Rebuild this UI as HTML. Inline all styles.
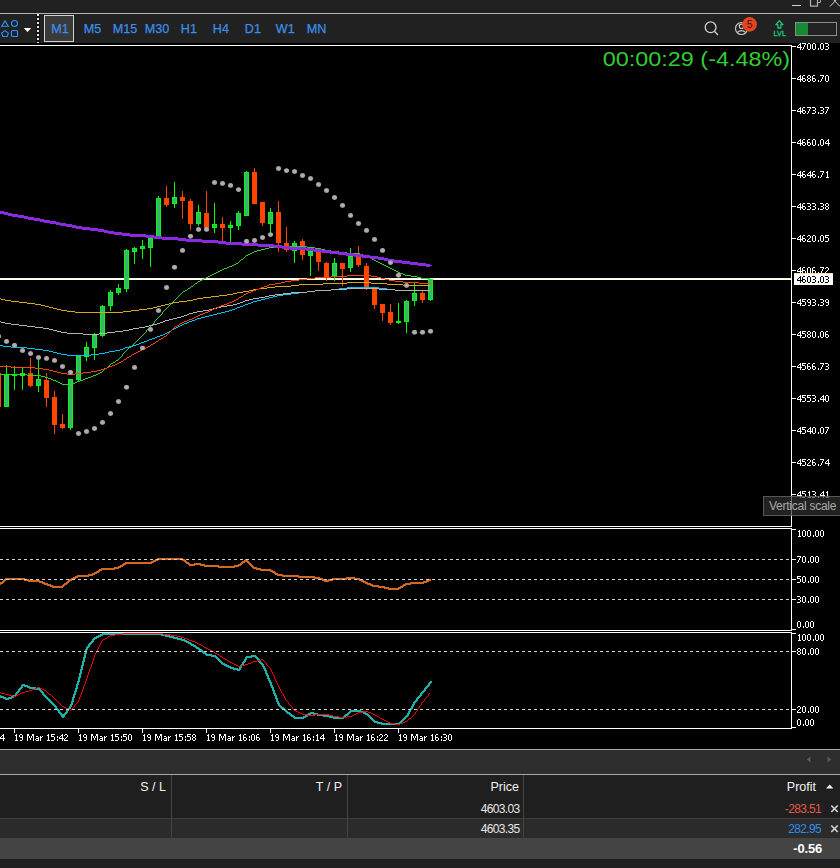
<!DOCTYPE html>
<html><head><meta charset="utf-8"><title>chart</title>
<style>
html,body{margin:0;padding:0;background:#1f1f1f;}
body{width:840px;height:868px;position:relative;overflow:hidden;font-family:"Liberation Sans",sans-serif;}
.abs{position:absolute}
.ax{position:absolute;left:797px;color:#fff;font-size:9.33px;line-height:12px;height:12px;letter-spacing:-0.19px;white-space:nowrap;will-change:transform}
.tm{position:absolute;top:731px;color:#fff;font-size:9.33px;line-height:12px;white-space:nowrap;letter-spacing:-0.19px;will-change:transform}
.tf{position:absolute;top:22px;color:#3b8eea;font-size:12.6px;line-height:15px;white-space:nowrap;margin-left:0.8px;-webkit-text-stroke:0.25px #3b8eea}
.hd{position:absolute;top:780px;color:#f2f2f2;font-size:12.5px;line-height:15px;white-space:nowrap;text-align:right}
.cell{position:absolute;font-size:12px;line-height:15px;white-space:nowrap;text-align:right;color:#e6e6e6;letter-spacing:-0.65px}
</style></head><body>
<!-- title + toolbar -->
<div class="abs" style="left:0;top:0;width:840px;height:43px;background:#212121"></div>
<div class="abs" style="left:0;top:13px;width:840px;height:1px;background:#b4b4b4"></div>
<svg id="chart" width="840" height="868" viewBox="0 0 840 868" style="position:absolute;left:0;top:0"><rect x="0" y="43" width="840" height="706" fill="#000"/><g shape-rendering="crispEdges"><rect x="0" y="278" width="791" height="1" fill="#fff1dc"/><rect x="0" y="279" width="791" height="1" fill="#fff"/><rect x="0" y="45" width="792" height="1" fill="#fff"/><rect x="791" y="45" width="1" height="482" fill="#fff"/><rect x="0" y="526" width="792" height="1" fill="#fff"/><rect x="0" y="528" width="792" height="1" fill="#fff"/><rect x="791" y="528" width="1" height="103" fill="#fff"/><rect x="0" y="630" width="792" height="1" fill="#fff"/><rect x="0" y="632" width="792" height="1" fill="#fff"/><rect x="791" y="632" width="1" height="97" fill="#fff"/><rect x="0" y="728" width="792" height="1" fill="#fff"/><rect x="792" y="46" width="4" height="1" fill="#fff"/><rect x="792" y="78" width="4" height="1" fill="#fff"/><rect x="792" y="110" width="4" height="1" fill="#fff"/><rect x="792" y="142" width="4" height="1" fill="#fff"/><rect x="792" y="174" width="4" height="1" fill="#fff"/><rect x="792" y="206" width="4" height="1" fill="#fff"/><rect x="792" y="238" width="4" height="1" fill="#fff"/><rect x="792" y="270" width="4" height="1" fill="#fff"/><rect x="792" y="302" width="4" height="1" fill="#fff"/><rect x="792" y="334" width="4" height="1" fill="#fff"/><rect x="792" y="366" width="4" height="1" fill="#fff"/><rect x="792" y="398" width="4" height="1" fill="#fff"/><rect x="792" y="430" width="4" height="1" fill="#fff"/><rect x="792" y="462" width="4" height="1" fill="#fff"/><rect x="792" y="494" width="4" height="1" fill="#fff"/><rect x="792" y="529" width="4" height="1" fill="#fff"/><rect x="792" y="559" width="4" height="1" fill="#fff"/><rect x="792" y="579" width="4" height="1" fill="#fff"/><rect x="792" y="599" width="4" height="1" fill="#fff"/><rect x="792" y="629" width="4" height="1" fill="#fff"/><rect x="792" y="633" width="4" height="1" fill="#fff"/><rect x="792" y="651" width="4" height="1" fill="#fff"/><rect x="792" y="709" width="4" height="1" fill="#fff"/><rect x="792" y="727" width="4" height="1" fill="#fff"/><rect x="14" y="728" width="1" height="5" fill="#fff"/><rect x="78" y="728" width="1" height="5" fill="#fff"/><rect x="142" y="728" width="1" height="5" fill="#fff"/><rect x="206" y="728" width="1" height="5" fill="#fff"/><rect x="270" y="728" width="1" height="5" fill="#fff"/><rect x="334" y="728" width="1" height="5" fill="#fff"/><rect x="398" y="728" width="1" height="5" fill="#fff"/><rect x="-2" y="370" width="1" height="37" fill="#ff4500"/><rect x="-4" y="373" width="5" height="34" fill="#ff4500"/><rect x="6" y="365" width="1" height="42" fill="#00ff00"/><rect x="4" y="375" width="5" height="32" fill="#00ff00"/><rect x="5" y="376" width="3" height="30" fill="#3cb371"/><rect x="14" y="366" width="1" height="24" fill="#00ff00"/><rect x="12" y="374" width="5" height="2" fill="#00ff00"/><rect x="22" y="368" width="1" height="22" fill="#00ff00"/><rect x="20" y="373" width="5" height="3" fill="#00ff00"/><rect x="21" y="374" width="3" height="1" fill="#3cb371"/><rect x="30" y="358" width="1" height="29" fill="#ff4500"/><rect x="28" y="373" width="5" height="13" fill="#ff4500"/><rect x="38" y="360" width="1" height="32" fill="#00ff00"/><rect x="36" y="379" width="5" height="7" fill="#00ff00"/><rect x="37" y="380" width="3" height="5" fill="#3cb371"/><rect x="46" y="373" width="1" height="34" fill="#ff4500"/><rect x="44" y="380" width="5" height="18" fill="#ff4500"/><rect x="54" y="391" width="1" height="43" fill="#ff4500"/><rect x="52" y="397" width="5" height="28" fill="#ff4500"/><rect x="62" y="414" width="1" height="15" fill="#ff4500"/><rect x="60" y="424" width="5" height="4" fill="#ff4500"/><rect x="70" y="379" width="1" height="51" fill="#00ff00"/><rect x="68" y="379" width="5" height="49" fill="#00ff00"/><rect x="69" y="380" width="3" height="47" fill="#3cb371"/><rect x="78" y="356" width="1" height="25" fill="#00ff00"/><rect x="76" y="356" width="5" height="24" fill="#00ff00"/><rect x="77" y="357" width="3" height="22" fill="#3cb371"/><rect x="86" y="342" width="1" height="19" fill="#00ff00"/><rect x="84" y="347" width="5" height="10" fill="#00ff00"/><rect x="85" y="348" width="3" height="8" fill="#3cb371"/><rect x="94" y="333" width="1" height="27" fill="#00ff00"/><rect x="92" y="335" width="5" height="13" fill="#00ff00"/><rect x="93" y="336" width="3" height="11" fill="#3cb371"/><rect x="102" y="305" width="1" height="32" fill="#00ff00"/><rect x="100" y="306" width="5" height="30" fill="#00ff00"/><rect x="101" y="307" width="3" height="28" fill="#3cb371"/><rect x="110" y="290" width="1" height="21" fill="#00ff00"/><rect x="108" y="292" width="5" height="14" fill="#00ff00"/><rect x="109" y="293" width="3" height="12" fill="#3cb371"/><rect x="118" y="284" width="1" height="11" fill="#00ff00"/><rect x="116" y="288" width="5" height="5" fill="#00ff00"/><rect x="117" y="289" width="3" height="3" fill="#3cb371"/><rect x="126" y="249" width="1" height="43" fill="#00ff00"/><rect x="124" y="250" width="5" height="39" fill="#00ff00"/><rect x="125" y="251" width="3" height="37" fill="#3cb371"/><rect x="134" y="247" width="1" height="17" fill="#00ff00"/><rect x="132" y="248" width="5" height="4" fill="#00ff00"/><rect x="133" y="249" width="3" height="2" fill="#3cb371"/><rect x="142" y="240" width="1" height="19" fill="#00ff00"/><rect x="140" y="246" width="5" height="3" fill="#00ff00"/><rect x="141" y="247" width="3" height="1" fill="#3cb371"/><rect x="150" y="236" width="1" height="31" fill="#00ff00"/><rect x="148" y="238" width="5" height="10" fill="#00ff00"/><rect x="149" y="239" width="3" height="8" fill="#3cb371"/><rect x="158" y="196" width="1" height="41" fill="#00ff00"/><rect x="156" y="198" width="5" height="39" fill="#00ff00"/><rect x="157" y="199" width="3" height="37" fill="#3cb371"/><rect x="166" y="186" width="1" height="21" fill="#ff4500"/><rect x="164" y="198" width="5" height="7" fill="#ff4500"/><rect x="174" y="182" width="1" height="26" fill="#00ff00"/><rect x="172" y="197" width="5" height="7" fill="#00ff00"/><rect x="173" y="198" width="3" height="5" fill="#3cb371"/><rect x="182" y="191" width="1" height="28" fill="#ff4500"/><rect x="180" y="197" width="5" height="4" fill="#ff4500"/><rect x="190" y="199" width="1" height="31" fill="#ff4500"/><rect x="188" y="201" width="5" height="23" fill="#ff4500"/><rect x="198" y="205" width="1" height="21" fill="#00ff00"/><rect x="196" y="212" width="5" height="12" fill="#00ff00"/><rect x="197" y="213" width="3" height="10" fill="#3cb371"/><rect x="206" y="191" width="1" height="38" fill="#ff4500"/><rect x="204" y="213" width="5" height="15" fill="#ff4500"/><rect x="214" y="203" width="1" height="30" fill="#00ff00"/><rect x="212" y="224" width="5" height="4" fill="#00ff00"/><rect x="213" y="225" width="3" height="2" fill="#3cb371"/><rect x="222" y="217" width="1" height="25" fill="#ff4500"/><rect x="220" y="224" width="5" height="4" fill="#ff4500"/><rect x="230" y="221" width="1" height="22" fill="#00ff00"/><rect x="228" y="225" width="5" height="3" fill="#00ff00"/><rect x="229" y="226" width="3" height="1" fill="#3cb371"/><rect x="238" y="211" width="1" height="19" fill="#00ff00"/><rect x="236" y="213" width="5" height="13" fill="#00ff00"/><rect x="237" y="214" width="3" height="11" fill="#3cb371"/><rect x="246" y="171" width="1" height="45" fill="#00ff00"/><rect x="244" y="172" width="5" height="44" fill="#00ff00"/><rect x="245" y="173" width="3" height="42" fill="#3cb371"/><rect x="254" y="168" width="1" height="36" fill="#ff4500"/><rect x="252" y="172" width="5" height="32" fill="#ff4500"/><rect x="262" y="202" width="1" height="24" fill="#ff4500"/><rect x="260" y="202" width="5" height="21" fill="#ff4500"/><rect x="270" y="208" width="1" height="26" fill="#00ff00"/><rect x="268" y="212" width="5" height="12" fill="#00ff00"/><rect x="269" y="213" width="3" height="10" fill="#3cb371"/><rect x="278" y="201" width="1" height="51" fill="#ff4500"/><rect x="276" y="212" width="5" height="31" fill="#ff4500"/><rect x="286" y="227" width="1" height="25" fill="#ff4500"/><rect x="284" y="243" width="5" height="7" fill="#ff4500"/><rect x="294" y="241" width="1" height="22" fill="#00ff00"/><rect x="292" y="243" width="5" height="8" fill="#00ff00"/><rect x="293" y="244" width="3" height="6" fill="#3cb371"/><rect x="302" y="239" width="1" height="21" fill="#ff4500"/><rect x="300" y="241" width="5" height="14" fill="#ff4500"/><rect x="310" y="248" width="1" height="28" fill="#00ff00"/><rect x="308" y="251" width="5" height="5" fill="#00ff00"/><rect x="309" y="252" width="3" height="3" fill="#3cb371"/><rect x="318" y="250" width="1" height="21" fill="#ff4500"/><rect x="316" y="251" width="5" height="11" fill="#ff4500"/><rect x="326" y="262" width="1" height="19" fill="#ff4500"/><rect x="324" y="263" width="5" height="15" fill="#ff4500"/><rect x="334" y="258" width="1" height="23" fill="#00ff00"/><rect x="332" y="263" width="5" height="13" fill="#00ff00"/><rect x="333" y="264" width="3" height="11" fill="#3cb371"/><rect x="342" y="263" width="1" height="23" fill="#ff4500"/><rect x="340" y="263" width="5" height="6" fill="#ff4500"/><rect x="350" y="248" width="1" height="24" fill="#00ff00"/><rect x="348" y="256" width="5" height="12" fill="#00ff00"/><rect x="349" y="257" width="3" height="10" fill="#3cb371"/><rect x="358" y="246" width="1" height="21" fill="#ff4500"/><rect x="356" y="254" width="5" height="11" fill="#ff4500"/><rect x="366" y="263" width="1" height="27" fill="#ff4500"/><rect x="364" y="266" width="5" height="21" fill="#ff4500"/><rect x="374" y="289" width="1" height="20" fill="#ff4500"/><rect x="372" y="289" width="5" height="16" fill="#ff4500"/><rect x="382" y="304" width="1" height="17" fill="#ff4500"/><rect x="380" y="304" width="5" height="9" fill="#ff4500"/><rect x="390" y="304" width="1" height="21" fill="#ff4500"/><rect x="388" y="312" width="5" height="11" fill="#ff4500"/><rect x="398" y="303" width="1" height="21" fill="#00ff00"/><rect x="396" y="321" width="5" height="2" fill="#00ff00"/><rect x="406" y="300" width="1" height="33" fill="#00ff00"/><rect x="404" y="301" width="5" height="21" fill="#00ff00"/><rect x="405" y="302" width="3" height="19" fill="#3cb371"/><rect x="414" y="283" width="1" height="23" fill="#00ff00"/><rect x="412" y="293" width="5" height="8" fill="#00ff00"/><rect x="413" y="294" width="3" height="6" fill="#3cb371"/><rect x="422" y="291" width="1" height="12" fill="#ff4500"/><rect x="420" y="293" width="5" height="7" fill="#ff4500"/><rect x="430" y="279" width="1" height="22" fill="#00ff00"/><rect x="428" y="279" width="5" height="21" fill="#00ff00"/><rect x="429" y="280" width="3" height="19" fill="#3cb371"/></g><g shape-rendering="crispEdges"><path d="M275 246h32v1h-32zM269 247h6v1h-6zM307 247h8v1h-8zM265 248h4v1h-4zM315 248h6v1h-6zM261 249h4v1h-4zM321 249h4v1h-4zM257 250h4v1h-4zM325 250h6v1h-6zM254 251h3v1h-3zM331 251h8v1h-8zM252 252h2v1h-2zM339 252h8v1h-8zM250 253h2v1h-2zM347 253h13v1h-13zM248 254h2v1h-2zM360 254h3v1h-3zM246 255h2v1h-2zM363 255h2v1h-2zM245 256h1v1h-1zM365 256h3v1h-3zM244 257h1v1h-1zM368 257h2v1h-2zM243 258h1v1h-1zM370 258h2v1h-2zM241 259h2v1h-2zM372 259h2v1h-2zM240 260h1v1h-1zM374 260h2v1h-2zM239 261h1v1h-1zM376 261h2v1h-2zM238 262h1v1h-1zM378 262h2v1h-2zM236 263h2v1h-2zM380 263h2v1h-2zM234 264h2v1h-2zM382 264h2v1h-2zM232 265h2v1h-2zM384 265h2v1h-2zM229 266h3v1h-3zM386 266h2v1h-2zM227 267h2v1h-2zM388 267h2v1h-2zM224 268h3v1h-3zM390 268h2v1h-2zM222 269h2v1h-2zM392 269h2v1h-2zM220 270h2v1h-2zM394 270h2v1h-2zM218 271h2v1h-2zM396 271h2v1h-2zM216 272h2v1h-2zM398 272h2v1h-2zM214 273h2v1h-2zM400 273h3v1h-3zM212 274h2v1h-2zM403 274h2v1h-2zM210 275h2v1h-2zM405 275h6v1h-6zM208 276h2v1h-2zM411 276h6v1h-6zM206 277h2v1h-2zM417 277h4v1h-4zM204 278h2v1h-2zM421 278h9v1h-9zM202 279h2v1h-2zM200 280h2v1h-2zM198 281h2v1h-2zM197 282h1v1h-1zM195 283h2v1h-2zM194 284h1v1h-1zM193 285h1v1h-1zM191 286h2v1h-2zM190 287h1v1h-1zM188 288h2v1h-2zM187 289h1v1h-1zM185 290h2v1h-2zM183 291h2v1h-2zM182 292h1v1h-1zM181 293h1v1h-1zM180 294h1v1h-1zM179 295h1v1h-1zM178 296h1v1h-1zM177 297h1v1h-1zM176 298h1v1h-1zM175 299h1v1h-1zM174 300h1v1h-1zM173 301h1v1h-1zM172 302h1v1h-1zM171 303h1v1h-1zM170 304h1v1h-1zM169 305h1v1h-1zM168 306h1v1h-1zM167 307h1v1h-1zM166 308h1v1h-1zM165 309h1v1h-1zM164 310h1v1h-1zM163 311h1v1h-1zM162 312h1v1h-1zM162 313h1v1h-1zM161 314h1v1h-1zM160 315h1v1h-1zM159 316h1v1h-1zM158 317h1v1h-1zM157 318h1v1h-1zM156 319h1v1h-1zM155 320h1v1h-1zM154 321h1v1h-1zM154 322h1v1h-1zM153 323h1v1h-1zM152 324h1v1h-1zM151 325h1v1h-1zM150 326h1v1h-1zM149 327h1v1h-1zM148 328h1v1h-1zM147 329h1v1h-1zM146 330h1v1h-1zM146 331h1v1h-1zM145 332h1v1h-1zM144 333h1v1h-1zM143 334h1v1h-1zM142 335h1v1h-1zM141 336h1v1h-1zM140 337h1v1h-1zM139 338h1v1h-1zM138 339h1v1h-1zM137 340h1v1h-1zM136 341h1v1h-1zM135 342h1v1h-1zM134 343h1v1h-1zM133 344h1v1h-1zM132 345h1v1h-1zM131 346h1v1h-1zM129 347h2v1h-2zM128 348h1v1h-1zM127 349h1v1h-1zM126 350h1v1h-1zM125 351h1v1h-1zM124 352h1v1h-1zM123 353h1v1h-1zM122 354h1v1h-1zM122 355h1v1h-1zM121 356h1v1h-1zM120 357h1v1h-1zM119 358h1v1h-1zM118 359h1v1h-1zM116 360h2v1h-2zM115 361h1v1h-1zM113 362h2v1h-2zM111 363h2v1h-2zM110 364h1v1h-1zM109 365h1v1h-1zM108 366h1v1h-1zM107 367h1v1h-1zM105 368h2v1h-2zM104 369h1v1h-1zM103 370h1v1h-1zM102 371h1v1h-1zM100 372h2v1h-2zM98 373h2v1h-2zM-2 374h29v1h-29zM96 374h2v1h-2zM27 375h14v1h-14zM93 375h3v1h-3zM41 376h4v1h-4zM91 376h2v1h-2zM45 377h3v1h-3zM88 377h3v1h-3zM48 378h3v1h-3zM85 378h3v1h-3zM51 379h2v1h-2zM83 379h2v1h-2zM53 380h3v1h-3zM80 380h3v1h-3zM56 381h2v1h-2zM77 381h3v1h-3zM58 382h2v1h-2zM75 382h2v1h-2zM60 383h2v1h-2zM72 383h3v1h-3zM62 384h10v1h-10z" fill="#32cd32"/><path d="M347 287h32v1h-32zM339 288h8v1h-8zM379 288h8v1h-8zM331 289h8v1h-8zM387 289h8v1h-8zM315 290h16v1h-16zM395 290h35v1h-35zM307 291h8v1h-8zM299 292h8v1h-8zM291 293h8v1h-8zM283 294h8v1h-8zM277 295h6v1h-6zM273 296h4v1h-4zM269 297h4v1h-4zM265 298h4v1h-4zM261 299h4v1h-4zM257 300h4v1h-4zM253 301h4v1h-4zM251 302h2v1h-2zM248 303h3v1h-3zM245 304h3v1h-3zM243 305h2v1h-2zM240 306h3v1h-3zM237 307h3v1h-3zM235 308h2v1h-2zM232 309h3v1h-3zM229 310h3v1h-3zM225 311h4v1h-4zM221 312h4v1h-4zM217 313h4v1h-4zM213 314h4v1h-4zM209 315h4v1h-4zM205 316h4v1h-4zM201 317h4v1h-4zM197 318h4v1h-4zM195 319h2v1h-2zM192 320h3v1h-3zM189 321h3v1h-3zM187 322h2v1h-2zM184 323h3v1h-3zM182 324h2v1h-2zM180 325h2v1h-2zM178 326h2v1h-2zM176 327h2v1h-2zM174 328h2v1h-2zM172 329h2v1h-2zM171 330h1v1h-1zM169 331h2v1h-2zM167 332h2v1h-2zM165 333h2v1h-2zM163 334h2v1h-2zM160 335h3v1h-3zM157 336h3v1h-3zM155 337h2v1h-2zM152 338h3v1h-3zM149 339h3v1h-3zM147 340h2v1h-2zM144 341h3v1h-3zM141 342h3v1h-3zM139 343h2v1h-2zM136 344h3v1h-3zM-2 345h5v1h-5zM133 345h3v1h-3zM3 346h8v1h-8zM129 346h4v1h-4zM11 347h16v1h-16zM125 347h4v1h-4zM27 348h8v1h-8zM123 348h2v1h-2zM35 349h8v1h-8zM120 349h3v1h-3zM43 350h6v1h-6zM115 350h5v1h-5zM49 351h4v1h-4zM109 351h6v1h-6zM53 352h4v1h-4zM105 352h4v1h-4zM57 353h4v1h-4zM99 353h6v1h-6zM61 354h6v1h-6zM91 354h8v1h-8zM67 355h24v1h-24z" fill="#00bfff"/><path d="M347 282h24v1h-24zM323 283h24v1h-24zM371 283h16v1h-16zM299 284h24v1h-24zM387 284h16v1h-16zM291 285h8v1h-8zM403 285h27v1h-27zM275 286h16v1h-16zM267 287h8v1h-8zM259 288h8v1h-8zM253 289h6v1h-6zM249 290h4v1h-4zM243 291h6v1h-6zM237 292h6v1h-6zM233 293h4v1h-4zM227 294h6v1h-6zM219 295h8v1h-8zM211 296h8v1h-8zM203 297h8v1h-8zM-2 298h3v1h-3zM197 298h6v1h-6zM1 299h4v1h-4zM193 299h4v1h-4zM5 300h6v1h-6zM187 300h6v1h-6zM11 301h8v1h-8zM179 301h8v1h-8zM19 302h8v1h-8zM173 302h6v1h-6zM27 303h8v1h-8zM169 303h4v1h-4zM35 304h6v1h-6zM165 304h4v1h-4zM41 305h4v1h-4zM161 305h4v1h-4zM45 306h4v1h-4zM157 306h4v1h-4zM49 307h4v1h-4zM153 307h4v1h-4zM53 308h4v1h-4zM147 308h6v1h-6zM57 309h4v1h-4zM139 309h8v1h-8zM61 310h6v1h-6zM131 310h8v1h-8zM67 311h8v1h-8zM123 311h8v1h-8zM75 312h48v1h-48z" fill="#daa520"/><path d="M347 288h32v1h-32zM331 289h16v1h-16zM379 289h16v1h-16zM315 290h16v1h-16zM395 290h35v1h-35zM307 291h8v1h-8zM291 292h16v1h-16zM283 293h8v1h-8zM275 294h8v1h-8zM269 295h6v1h-6zM265 296h4v1h-4zM259 297h6v1h-6zM253 298h6v1h-6zM249 299h4v1h-4zM245 300h4v1h-4zM243 301h2v1h-2zM240 302h3v1h-3zM237 303h3v1h-3zM233 304h4v1h-4zM227 305h6v1h-6zM221 306h6v1h-6zM217 307h4v1h-4zM213 308h4v1h-4zM209 309h4v1h-4zM203 310h6v1h-6zM197 311h6v1h-6zM193 312h4v1h-4zM189 313h4v1h-4zM187 314h2v1h-2zM184 315h3v1h-3zM181 316h3v1h-3zM177 317h4v1h-4zM173 318h4v1h-4zM169 319h4v1h-4zM165 320h4v1h-4zM-2 321h3v1h-3zM163 321h2v1h-2zM1 322h4v1h-4zM160 322h3v1h-3zM5 323h6v1h-6zM157 323h3v1h-3zM11 324h8v1h-8zM153 324h4v1h-4zM19 325h8v1h-8zM149 325h4v1h-4zM27 326h8v1h-8zM145 326h4v1h-4zM35 327h8v1h-8zM139 327h6v1h-6zM43 328h6v1h-6zM133 328h6v1h-6zM49 329h4v1h-4zM129 329h4v1h-4zM53 330h4v1h-4zM123 330h6v1h-6zM57 331h4v1h-4zM115 331h8v1h-8zM61 332h6v1h-6zM107 332h8v1h-8zM67 333h16v1h-16zM99 333h8v1h-8zM83 334h16v1h-16z" fill="#b4b4b4"/><path d="M347 275h24v1h-24zM331 276h16v1h-16zM371 276h6v1h-6zM315 277h16v1h-16zM377 277h4v1h-4zM307 278h8v1h-8zM381 278h4v1h-4zM299 279h8v1h-8zM385 279h4v1h-4zM291 280h8v1h-8zM389 280h6v1h-6zM285 281h6v1h-6zM395 281h8v1h-8zM281 282h4v1h-4zM403 282h16v1h-16zM275 283h6v1h-6zM419 283h11v1h-11zM269 284h6v1h-6zM267 285h2v1h-2zM264 286h3v1h-3zM261 287h3v1h-3zM259 288h2v1h-2zM256 289h3v1h-3zM253 290h3v1h-3zM251 291h2v1h-2zM248 292h3v1h-3zM246 293h2v1h-2zM244 294h2v1h-2zM243 295h1v1h-1zM241 296h2v1h-2zM239 297h2v1h-2zM238 298h1v1h-1zM236 299h2v1h-2zM234 300h2v1h-2zM232 301h2v1h-2zM229 302h3v1h-3zM227 303h2v1h-2zM224 304h3v1h-3zM221 305h3v1h-3zM219 306h2v1h-2zM216 307h3v1h-3zM214 308h2v1h-2zM212 309h2v1h-2zM210 310h2v1h-2zM208 311h2v1h-2zM205 312h3v1h-3zM203 313h2v1h-2zM200 314h3v1h-3zM198 315h2v1h-2zM196 316h2v1h-2zM194 317h2v1h-2zM192 318h2v1h-2zM189 319h3v1h-3zM187 320h2v1h-2zM184 321h3v1h-3zM182 322h2v1h-2zM180 323h2v1h-2zM179 324h1v1h-1zM177 325h2v1h-2zM175 326h2v1h-2zM174 327h1v1h-1zM173 328h1v1h-1zM172 329h1v1h-1zM171 330h1v1h-1zM170 331h1v1h-1zM169 332h1v1h-1zM168 333h1v1h-1zM167 334h1v1h-1zM166 335h1v1h-1zM164 336h2v1h-2zM163 337h1v1h-1zM161 338h2v1h-2zM159 339h2v1h-2zM158 340h1v1h-1zM156 341h2v1h-2zM155 342h1v1h-1zM153 343h2v1h-2zM151 344h2v1h-2zM150 345h1v1h-1zM148 346h2v1h-2zM146 347h2v1h-2zM144 348h2v1h-2zM142 349h2v1h-2zM140 350h2v1h-2zM138 351h2v1h-2zM136 352h2v1h-2zM134 353h2v1h-2zM132 354h2v1h-2zM131 355h1v1h-1zM129 356h2v1h-2zM127 357h2v1h-2zM126 358h1v1h-1zM124 359h2v1h-2zM123 360h1v1h-1zM121 361h2v1h-2zM119 362h2v1h-2zM117 363h2v1h-2zM115 364h2v1h-2zM112 365h3v1h-3zM-2 366h13v1h-13zM109 366h3v1h-3zM11 367h24v1h-24zM107 367h2v1h-2zM35 368h8v1h-8zM104 368h3v1h-3zM43 369h6v1h-6zM101 369h3v1h-3zM49 370h4v1h-4zM97 370h4v1h-4zM53 371h4v1h-4zM91 371h6v1h-6zM57 372h4v1h-4zM83 372h8v1h-8zM61 373h6v1h-6zM75 373h8v1h-8zM67 374h8v1h-8z" fill="#ff4500"/><path d="M-3 210h3v1h-3zM-3 211h7v1h-7zM-3 212h11v1h-11zM0 213h12v1h-12zM4 214h14v1h-14zM8 215h16v1h-16zM12 216h16v1h-16zM18 217h16v1h-16zM24 218h16v1h-16zM28 219h16v1h-16zM34 220h16v1h-16zM40 221h16v1h-16zM44 222h16v1h-16zM50 223h16v1h-16zM56 224h16v1h-16zM60 225h16v1h-16zM66 226h16v1h-16zM72 227h18v1h-18zM76 228h22v1h-22zM82 229h22v1h-22zM90 230h18v1h-18zM98 231h16v1h-16zM104 232h18v1h-18zM108 233h22v1h-22zM114 234h32v1h-32zM122 235h32v1h-32zM130 236h32v1h-32zM146 237h32v1h-32zM154 238h32v1h-32zM162 239h40v1h-40zM178 240h40v1h-40zM186 241h40v1h-40zM202 242h40v1h-40zM218 243h40v1h-40zM226 244h48v1h-48zM242 245h40v1h-40zM258 246h32v1h-32zM274 247h32v1h-32zM282 248h32v1h-32zM290 249h32v1h-32zM306 250h24v1h-24zM314 251h24v1h-24zM322 252h24v1h-24zM330 253h24v1h-24zM338 254h24v1h-24zM346 255h24v1h-24zM354 256h24v1h-24zM362 257h22v1h-22zM370 258h18v1h-18zM378 259h16v1h-16zM384 260h18v1h-18zM388 261h22v1h-22zM394 262h24v1h-24zM402 263h24v1h-24zM410 264h20v1h-20zM418 265h12v1h-12zM426 266h4v1h-4zM430 265h2v1h-2z" fill="#8a2be2"/><path d="M157 558h26v1h-26zM155 559h30v1h-30zM245 559h2v1h-2zM153 560h5v1h-5zM182 560h4v1h-4zM244 560h4v1h-4zM151 561h5v1h-5zM184 561h3v1h-3zM242 561h7v1h-7zM125 562h29v1h-29zM185 562h4v1h-4zM241 562h4v1h-4zM247 562h3v1h-3zM123 563h29v1h-29zM186 563h4v1h-4zM194 563h7v1h-7zM240 563h3v1h-3zM248 563h3v1h-3zM122 564h4v1h-4zM188 564h17v1h-17zM238 564h4v1h-4zM249 564h3v1h-3zM120 565h4v1h-4zM189 565h6v1h-6zM200 565h19v1h-19zM234 565h7v1h-7zM250 565h3v1h-3zM118 566h5v1h-5zM204 566h35v1h-35zM251 566h3v1h-3zM114 567h7v1h-7zM218 567h17v1h-17zM252 567h5v1h-5zM101 568h18v1h-18zM253 568h8v1h-8zM99 569h16v1h-16zM256 569h15v1h-15zM98 570h4v1h-4zM260 570h13v1h-13zM96 571h4v1h-4zM270 571h5v1h-5zM94 572h5v1h-5zM272 572h4v1h-4zM92 573h5v1h-5zM274 573h4v1h-4zM88 574h7v1h-7zM275 574h8v1h-8zM77 575h16v1h-16zM277 575h22v1h-22zM75 576h14v1h-14zM282 576h33v1h-33zM73 577h5v1h-5zM298 577h22v1h-22zM346 577h9v1h-9zM5 578h20v1h-20zM71 578h5v1h-5zM314 578h9v1h-9zM332 578h28v1h-28zM4 579h25v1h-25zM69 579h5v1h-5zM319 579h6v1h-6zM328 579h19v1h-19zM354 579h8v1h-8zM428 579h3v1h-3zM3 580h3v1h-3zM24 580h16v1h-16zM68 580h4v1h-4zM322 580h11v1h-11zM359 580h5v1h-5zM426 580h5v1h-5zM2 581h3v1h-3zM28 581h15v1h-15zM67 581h3v1h-3zM324 581h5v1h-5zM361 581h5v1h-5zM423 581h6v1h-6zM0 582h4v1h-4zM39 582h6v1h-6zM66 582h3v1h-3zM363 582h5v1h-5zM410 582h17v1h-17zM-1 583h4v1h-4zM42 583h6v1h-6zM64 583h4v1h-4zM365 583h6v1h-6zM405 583h19v1h-19zM-2 584h3v1h-3zM44 584h7v1h-7zM63 584h4v1h-4zM367 584h6v1h-6zM403 584h8v1h-8zM-3 585h3v1h-3zM47 585h6v1h-6zM62 585h3v1h-3zM370 585h9v1h-9zM402 585h4v1h-4zM-3 586h2v1h-2zM50 586h14v1h-14zM372 586h13v1h-13zM400 586h4v1h-4zM52 587h11v1h-11zM378 587h11v1h-11zM398 587h5v1h-5zM384 588h17v1h-17zM388 589h11v1h-11z" fill="#d2691e"/><path d="M102 633h60v1h-60zM100 634h66v1h-66zM98 635h5v1h-5zM161 635h9v1h-9zM96 636h5v1h-5zM165 636h9v1h-9zM94 637h5v1h-5zM169 637h9v1h-9zM93 638h4v1h-4zM173 638h9v1h-9zM92 639h3v1h-3zM177 639h8v1h-8zM92 640h2v1h-2zM181 640h6v1h-6zM91 641h3v1h-3zM184 641h5v1h-5zM90 642h3v1h-3zM186 642h5v1h-5zM89 643h3v1h-3zM188 643h4v1h-4zM88 644h3v1h-3zM190 644h4v1h-4zM88 645h2v1h-2zM191 645h5v1h-5zM87 646h3v1h-3zM193 646h4v1h-4zM86 647h3v1h-3zM195 647h4v1h-4zM86 648h2v1h-2zM196 648h4v1h-4zM85 649h3v1h-3zM198 649h4v1h-4zM85 650h2v1h-2zM199 650h4v1h-4zM85 651h2v1h-2zM201 651h3v1h-3zM85 652h2v1h-2zM202 652h4v1h-4zM84 653h3v1h-3zM203 653h4v1h-4zM84 654h2v1h-2zM205 654h7v1h-7zM84 655h2v1h-2zM206 655h10v1h-10zM251 655h5v1h-5zM84 656h2v1h-2zM211 656h6v1h-6zM246 656h11v1h-11zM83 657h3v1h-3zM215 657h3v1h-3zM245 657h7v1h-7zM255 657h3v1h-3zM83 658h2v1h-2zM216 658h3v1h-3zM245 658h2v1h-2zM256 658h3v1h-3zM83 659h2v1h-2zM217 659h3v1h-3zM244 659h3v1h-3zM257 659h3v1h-3zM83 660h2v1h-2zM218 660h3v1h-3zM244 660h2v1h-2zM258 660h2v1h-2zM82 661h3v1h-3zM219 661h3v1h-3zM243 661h3v1h-3zM258 661h3v1h-3zM82 662h2v1h-2zM220 662h3v1h-3zM242 662h3v1h-3zM259 662h3v1h-3zM82 663h2v1h-2zM221 663h4v1h-4zM242 663h2v1h-2zM260 663h3v1h-3zM82 664h2v1h-2zM222 664h5v1h-5zM241 664h3v1h-3zM261 664h3v1h-3zM81 665h3v1h-3zM224 665h5v1h-5zM240 665h3v1h-3zM262 665h2v1h-2zM81 666h2v1h-2zM226 666h5v1h-5zM240 666h2v1h-2zM262 666h3v1h-3zM81 667h2v1h-2zM228 667h6v1h-6zM239 667h3v1h-3zM263 667h2v1h-2zM81 668h2v1h-2zM230 668h8v1h-8zM239 668h2v1h-2zM263 668h3v1h-3zM80 669h3v1h-3zM233 669h8v1h-8zM264 669h2v1h-2zM80 670h2v1h-2zM237 670h3v1h-3zM264 670h3v1h-3zM80 671h2v1h-2zM265 671h2v1h-2zM80 672h2v1h-2zM265 672h2v1h-2zM79 673h3v1h-3zM265 673h3v1h-3zM79 674h2v1h-2zM266 674h2v1h-2zM79 675h2v1h-2zM266 675h3v1h-3zM79 676h2v1h-2zM267 676h2v1h-2zM78 677h3v1h-3zM267 677h2v1h-2zM78 678h2v1h-2zM267 678h3v1h-3zM78 679h2v1h-2zM268 679h2v1h-2zM78 680h2v1h-2zM268 680h3v1h-3zM77 681h3v1h-3zM269 681h2v1h-2zM430 681h2v1h-2zM77 682h2v1h-2zM269 682h3v1h-3zM429 682h3v1h-3zM77 683h2v1h-2zM270 683h2v1h-2zM428 683h3v1h-3zM22 684h3v1h-3zM76 684h3v1h-3zM270 684h2v1h-2zM428 684h2v1h-2zM21 685h7v1h-7zM76 685h2v1h-2zM270 685h3v1h-3zM427 685h3v1h-3zM21 686h2v1h-2zM24 686h6v1h-6zM76 686h2v1h-2zM271 686h2v1h-2zM426 686h3v1h-3zM20 687h3v1h-3zM27 687h9v1h-9zM76 687h2v1h-2zM271 687h3v1h-3zM425 687h3v1h-3zM19 688h3v1h-3zM29 688h11v1h-11zM75 688h3v1h-3zM272 688h2v1h-2zM424 688h3v1h-3zM18 689h3v1h-3zM35 689h6v1h-6zM75 689h2v1h-2zM272 689h2v1h-2zM424 689h2v1h-2zM18 690h2v1h-2zM39 690h3v1h-3zM75 690h2v1h-2zM272 690h3v1h-3zM423 690h3v1h-3zM17 691h3v1h-3zM40 691h3v1h-3zM74 691h3v1h-3zM273 691h2v1h-2zM422 691h3v1h-3zM16 692h3v1h-3zM41 692h3v1h-3zM74 692h2v1h-2zM273 692h2v1h-2zM421 692h3v1h-3zM15 693h3v1h-3zM42 693h2v1h-2zM74 693h2v1h-2zM273 693h3v1h-3zM420 693h3v1h-3zM15 694h2v1h-2zM42 694h3v1h-3zM73 694h3v1h-3zM274 694h2v1h-2zM420 694h2v1h-2zM-2 695h3v1h-3zM13 695h4v1h-4zM43 695h3v1h-3zM73 695h2v1h-2zM274 695h3v1h-3zM419 695h3v1h-3zM-2 696h6v1h-6zM11 696h5v1h-5zM44 696h3v1h-3zM73 696h2v1h-2zM275 696h2v1h-2zM418 696h3v1h-3zM0 697h6v1h-6zM8 697h6v1h-6zM45 697h3v1h-3zM72 697h3v1h-3zM275 697h2v1h-2zM417 697h3v1h-3zM3 698h9v1h-9zM46 698h3v1h-3zM72 698h2v1h-2zM275 698h3v1h-3zM416 698h3v1h-3zM5 699h4v1h-4zM47 699h3v1h-3zM72 699h2v1h-2zM276 699h2v1h-2zM416 699h2v1h-2zM48 700h3v1h-3zM72 700h2v1h-2zM276 700h2v1h-2zM415 700h3v1h-3zM49 701h3v1h-3zM71 701h3v1h-3zM276 701h3v1h-3zM414 701h3v1h-3zM50 702h3v1h-3zM71 702h2v1h-2zM277 702h2v1h-2zM413 702h3v1h-3zM51 703h3v1h-3zM71 703h2v1h-2zM277 703h3v1h-3zM413 703h2v1h-2zM52 704h3v1h-3zM70 704h3v1h-3zM278 704h2v1h-2zM412 704h3v1h-3zM53 705h3v1h-3zM70 705h2v1h-2zM278 705h3v1h-3zM412 705h2v1h-2zM54 706h3v1h-3zM69 706h3v1h-3zM279 706h3v1h-3zM411 706h3v1h-3zM55 707h2v1h-2zM69 707h2v1h-2zM280 707h4v1h-4zM411 707h2v1h-2zM55 708h3v1h-3zM68 708h3v1h-3zM281 708h4v1h-4zM410 708h3v1h-3zM56 709h3v1h-3zM67 709h3v1h-3zM283 709h3v1h-3zM409 709h3v1h-3zM57 710h3v1h-3zM66 710h3v1h-3zM284 710h3v1h-3zM350 710h11v1h-11zM409 710h2v1h-2zM58 711h2v1h-2zM66 711h2v1h-2zM285 711h3v1h-3zM349 711h15v1h-15zM408 711h3v1h-3zM58 712h3v1h-3zM65 712h3v1h-3zM286 712h4v1h-4zM310 712h4v1h-4zM348 712h3v1h-3zM360 712h6v1h-6zM408 712h2v1h-2zM59 713h3v1h-3zM64 713h3v1h-3zM287 713h4v1h-4zM308 713h10v1h-10zM347 713h3v1h-3zM363 713h5v1h-5zM407 713h3v1h-3zM60 714h6v1h-6zM289 714h3v1h-3zM307 714h4v1h-4zM313 714h11v1h-11zM345 714h4v1h-4zM365 714h4v1h-4zM407 714h2v1h-2zM61 715h4v1h-4zM290 715h4v1h-4zM305 715h4v1h-4zM317 715h13v1h-13zM344 715h4v1h-4zM367 715h3v1h-3zM406 715h3v1h-3zM61 716h4v1h-4zM291 716h4v1h-4zM303 716h5v1h-5zM323 716h11v1h-11zM343 716h3v1h-3zM368 716h3v1h-3zM405 716h3v1h-3zM62 717h2v1h-2zM293 717h13v1h-13zM329 717h16v1h-16zM369 717h3v1h-3zM404 717h3v1h-3zM294 718h10v1h-10zM333 718h11v1h-11zM370 718h3v1h-3zM403 718h3v1h-3zM371 719h3v1h-3zM402 719h3v1h-3zM372 720h3v1h-3zM401 720h3v1h-3zM373 721h5v1h-5zM400 721h3v1h-3zM374 722h8v1h-8zM399 722h3v1h-3zM377 723h24v1h-24zM381 724h19v1h-19z" fill="#20b2aa"/><path d="M123 633h40v1h-40zM115 634h8v1h-8zM163 634h8v1h-8zM110 635h5v1h-5zM171 635h6v1h-6zM108 636h2v1h-2zM177 636h4v1h-4zM107 637h1v1h-1zM181 637h3v1h-3zM105 638h2v1h-2zM184 638h3v1h-3zM103 639h2v1h-2zM187 639h2v1h-2zM102 640h1v1h-1zM189 640h3v1h-3zM101 641h1v1h-1zM192 641h3v1h-3zM101 642h1v1h-1zM195 642h2v1h-2zM100 643h1v1h-1zM197 643h2v1h-2zM100 644h1v1h-1zM199 644h2v1h-2zM99 645h1v1h-1zM201 645h2v1h-2zM99 646h1v1h-1zM203 646h1v1h-1zM98 647h1v1h-1zM204 647h2v1h-2zM98 648h1v1h-1zM206 648h2v1h-2zM97 649h1v1h-1zM208 649h2v1h-2zM97 650h1v1h-1zM210 650h2v1h-2zM96 651h1v1h-1zM212 651h2v1h-2zM96 652h1v1h-1zM214 652h1v1h-1zM95 653h1v1h-1zM215 653h2v1h-2zM95 654h1v1h-1zM217 654h2v1h-2zM94 655h1v1h-1zM219 655h1v1h-1zM94 656h1v1h-1zM220 656h2v1h-2zM94 657h1v1h-1zM222 657h1v1h-1zM93 658h1v1h-1zM223 658h2v1h-2zM93 659h1v1h-1zM225 659h2v1h-2zM261 659h2v1h-2zM93 660h1v1h-1zM227 660h1v1h-1zM257 660h4v1h-4zM263 660h1v1h-1zM92 661h1v1h-1zM228 661h2v1h-2zM253 661h4v1h-4zM264 661h1v1h-1zM92 662h1v1h-1zM230 662h2v1h-2zM251 662h2v1h-2zM265 662h1v1h-1zM92 663h1v1h-1zM232 663h2v1h-2zM248 663h3v1h-3zM266 663h1v1h-1zM91 664h1v1h-1zM234 664h2v1h-2zM245 664h3v1h-3zM266 664h1v1h-1zM91 665h1v1h-1zM236 665h2v1h-2zM241 665h4v1h-4zM267 665h1v1h-1zM91 666h1v1h-1zM238 666h3v1h-3zM268 666h1v1h-1zM90 667h1v1h-1zM269 667h1v1h-1zM90 668h1v1h-1zM270 668h1v1h-1zM89 669h1v1h-1zM270 669h1v1h-1zM89 670h1v1h-1zM271 670h1v1h-1zM89 671h1v1h-1zM271 671h1v1h-1zM88 672h1v1h-1zM272 672h1v1h-1zM88 673h1v1h-1zM272 673h1v1h-1zM88 674h1v1h-1zM273 674h1v1h-1zM87 675h1v1h-1zM273 675h1v1h-1zM87 676h1v1h-1zM274 676h1v1h-1zM87 677h1v1h-1zM274 677h1v1h-1zM86 678h1v1h-1zM274 678h1v1h-1zM86 679h1v1h-1zM275 679h1v1h-1zM86 680h1v1h-1zM275 680h1v1h-1zM85 681h1v1h-1zM276 681h1v1h-1zM85 682h1v1h-1zM276 682h1v1h-1zM85 683h1v1h-1zM277 683h1v1h-1zM84 684h1v1h-1zM277 684h1v1h-1zM84 685h1v1h-1zM278 685h1v1h-1zM83 686h1v1h-1zM278 686h1v1h-1zM37 687h3v1h-3zM83 687h1v1h-1zM279 687h1v1h-1zM35 688h2v1h-2zM40 688h2v1h-2zM83 688h1v1h-1zM279 688h1v1h-1zM32 689h3v1h-3zM42 689h2v1h-2zM82 689h1v1h-1zM280 689h1v1h-1zM29 690h3v1h-3zM44 690h2v1h-2zM82 690h1v1h-1zM280 690h1v1h-1zM25 691h4v1h-4zM46 691h1v1h-1zM82 691h1v1h-1zM281 691h1v1h-1zM-2 692h3v1h-3zM22 692h3v1h-3zM47 692h1v1h-1zM81 692h1v1h-1zM281 692h1v1h-1zM1 693h4v1h-4zM20 693h2v1h-2zM48 693h1v1h-1zM81 693h1v1h-1zM282 693h1v1h-1zM429 693h1v1h-1zM5 694h4v1h-4zM18 694h2v1h-2zM49 694h2v1h-2zM81 694h1v1h-1zM283 694h1v1h-1zM428 694h1v1h-1zM9 695h4v1h-4zM16 695h2v1h-2zM51 695h1v1h-1zM80 695h1v1h-1zM283 695h1v1h-1zM428 695h1v1h-1zM13 696h3v1h-3zM52 696h1v1h-1zM80 696h1v1h-1zM284 696h1v1h-1zM427 696h1v1h-1zM53 697h1v1h-1zM79 697h1v1h-1zM284 697h1v1h-1zM426 697h1v1h-1zM54 698h1v1h-1zM79 698h1v1h-1zM285 698h1v1h-1zM425 698h1v1h-1zM55 699h1v1h-1zM79 699h1v1h-1zM285 699h1v1h-1zM424 699h1v1h-1zM56 700h1v1h-1zM78 700h1v1h-1zM286 700h1v1h-1zM424 700h1v1h-1zM57 701h1v1h-1zM78 701h1v1h-1zM287 701h1v1h-1zM423 701h1v1h-1zM58 702h1v1h-1zM77 702h1v1h-1zM288 702h1v1h-1zM422 702h1v1h-1zM59 703h1v1h-1zM76 703h1v1h-1zM288 703h1v1h-1zM421 703h1v1h-1zM60 704h1v1h-1zM75 704h1v1h-1zM289 704h1v1h-1zM421 704h1v1h-1zM61 705h1v1h-1zM74 705h1v1h-1zM290 705h1v1h-1zM420 705h1v1h-1zM62 706h2v1h-2zM74 706h1v1h-1zM291 706h1v1h-1zM419 706h1v1h-1zM64 707h2v1h-2zM73 707h1v1h-1zM292 707h1v1h-1zM419 707h1v1h-1zM66 708h2v1h-2zM72 708h1v1h-1zM292 708h1v1h-1zM418 708h1v1h-1zM68 709h2v1h-2zM71 709h1v1h-1zM293 709h1v1h-1zM417 709h1v1h-1zM70 710h1v1h-1zM294 710h2v1h-2zM417 710h1v1h-1zM296 711h2v1h-2zM363 711h5v1h-5zM416 711h1v1h-1zM298 712h2v1h-2zM358 712h5v1h-5zM368 712h3v1h-3zM415 712h1v1h-1zM300 713h2v1h-2zM356 713h2v1h-2zM371 713h2v1h-2zM415 713h1v1h-1zM302 714h5v1h-5zM315 714h14v1h-14zM354 714h2v1h-2zM373 714h2v1h-2zM414 714h1v1h-1zM307 715h8v1h-8zM329 715h4v1h-4zM352 715h2v1h-2zM375 715h2v1h-2zM413 715h1v1h-1zM333 716h6v1h-6zM347 716h5v1h-5zM377 716h2v1h-2zM412 716h1v1h-1zM339 717h8v1h-8zM379 717h1v1h-1zM411 717h1v1h-1zM380 718h2v1h-2zM409 718h2v1h-2zM382 719h2v1h-2zM408 719h1v1h-1zM384 720h2v1h-2zM407 720h1v1h-1zM386 721h2v1h-2zM405 721h2v1h-2zM388 722h2v1h-2zM403 722h2v1h-2zM390 723h5v1h-5zM400 723h3v1h-3zM395 724h5v1h-5z" fill="#ff0000"/><line x1="0" y1="559.5" x2="791" y2="559.5" stroke="#d4d4d4" stroke-width="1" stroke-dasharray="3 3"/><line x1="0" y1="579.5" x2="791" y2="579.5" stroke="#d4d4d4" stroke-width="1" stroke-dasharray="3 3"/><line x1="0" y1="599.5" x2="791" y2="599.5" stroke="#d4d4d4" stroke-width="1" stroke-dasharray="3 3"/><line x1="0" y1="651.5" x2="791" y2="651.5" stroke="#d4d4d4" stroke-width="1" stroke-dasharray="3 3"/><line x1="0" y1="709.5" x2="791" y2="709.5" stroke="#d4d4d4" stroke-width="1" stroke-dasharray="3 3"/></g><g><circle cx="-1.9" cy="336.25" r="2.2" fill="#6f97c4"/><circle cx="-1.1" cy="336.25" r="2.2" fill="#c99a6c"/><circle cx="-1.5" cy="336.25" r="2.05" fill="#acacac"/><circle cx="6.1" cy="341.4" r="2.2" fill="#6f97c4"/><circle cx="6.9" cy="341.4" r="2.2" fill="#c99a6c"/><circle cx="6.5" cy="341.4" r="2.05" fill="#acacac"/><circle cx="14.1" cy="345.25" r="2.2" fill="#6f97c4"/><circle cx="14.9" cy="345.25" r="2.2" fill="#c99a6c"/><circle cx="14.5" cy="345.25" r="2.05" fill="#acacac"/><circle cx="22.1" cy="350.5" r="2.2" fill="#6f97c4"/><circle cx="22.9" cy="350.5" r="2.2" fill="#c99a6c"/><circle cx="22.5" cy="350.5" r="2.05" fill="#acacac"/><circle cx="30.1" cy="353.5" r="2.2" fill="#6f97c4"/><circle cx="30.9" cy="353.5" r="2.2" fill="#c99a6c"/><circle cx="30.5" cy="353.5" r="2.05" fill="#acacac"/><circle cx="38.1" cy="357.5" r="2.2" fill="#6f97c4"/><circle cx="38.9" cy="357.5" r="2.2" fill="#c99a6c"/><circle cx="38.5" cy="357.5" r="2.05" fill="#acacac"/><circle cx="46.1" cy="358.4" r="2.2" fill="#6f97c4"/><circle cx="46.9" cy="358.4" r="2.2" fill="#c99a6c"/><circle cx="46.5" cy="358.4" r="2.05" fill="#acacac"/><circle cx="54.1" cy="360.4" r="2.2" fill="#6f97c4"/><circle cx="54.9" cy="360.4" r="2.2" fill="#c99a6c"/><circle cx="54.5" cy="360.4" r="2.05" fill="#acacac"/><circle cx="62.1" cy="366.5" r="2.2" fill="#6f97c4"/><circle cx="62.9" cy="366.5" r="2.2" fill="#c99a6c"/><circle cx="62.5" cy="366.5" r="2.05" fill="#acacac"/><circle cx="70.1" cy="372.25" r="2.2" fill="#6f97c4"/><circle cx="70.9" cy="372.25" r="2.2" fill="#c99a6c"/><circle cx="70.5" cy="372.25" r="2.05" fill="#acacac"/><circle cx="78.1" cy="433.5" r="2.2" fill="#6f97c4"/><circle cx="78.9" cy="433.5" r="2.2" fill="#c99a6c"/><circle cx="78.5" cy="433.5" r="2.05" fill="#acacac"/><circle cx="86.1" cy="431.5" r="2.2" fill="#6f97c4"/><circle cx="86.9" cy="431.5" r="2.2" fill="#c99a6c"/><circle cx="86.5" cy="431.5" r="2.05" fill="#acacac"/><circle cx="94.1" cy="428.5" r="2.2" fill="#6f97c4"/><circle cx="94.9" cy="428.5" r="2.2" fill="#c99a6c"/><circle cx="94.5" cy="428.5" r="2.05" fill="#acacac"/><circle cx="102.1" cy="422.4" r="2.2" fill="#6f97c4"/><circle cx="102.9" cy="422.4" r="2.2" fill="#c99a6c"/><circle cx="102.5" cy="422.4" r="2.05" fill="#acacac"/><circle cx="110.1" cy="413.5" r="2.2" fill="#6f97c4"/><circle cx="110.9" cy="413.5" r="2.2" fill="#c99a6c"/><circle cx="110.5" cy="413.5" r="2.05" fill="#acacac"/><circle cx="118.1" cy="401.5" r="2.2" fill="#6f97c4"/><circle cx="118.9" cy="401.5" r="2.2" fill="#c99a6c"/><circle cx="118.5" cy="401.5" r="2.05" fill="#acacac"/><circle cx="126.1" cy="387.3" r="2.2" fill="#6f97c4"/><circle cx="126.9" cy="387.3" r="2.2" fill="#c99a6c"/><circle cx="126.5" cy="387.3" r="2.05" fill="#acacac"/><circle cx="134.1" cy="367.4" r="2.2" fill="#6f97c4"/><circle cx="134.9" cy="367.4" r="2.2" fill="#c99a6c"/><circle cx="134.5" cy="367.4" r="2.05" fill="#acacac"/><circle cx="142.1" cy="348" r="2.2" fill="#6f97c4"/><circle cx="142.9" cy="348" r="2.2" fill="#c99a6c"/><circle cx="142.5" cy="348" r="2.05" fill="#acacac"/><circle cx="150.1" cy="329.4" r="2.2" fill="#6f97c4"/><circle cx="150.9" cy="329.4" r="2.2" fill="#c99a6c"/><circle cx="150.5" cy="329.4" r="2.05" fill="#acacac"/><circle cx="158.1" cy="310.5" r="2.2" fill="#6f97c4"/><circle cx="158.9" cy="310.5" r="2.2" fill="#c99a6c"/><circle cx="158.5" cy="310.5" r="2.05" fill="#acacac"/><circle cx="166.1" cy="287.5" r="2.2" fill="#6f97c4"/><circle cx="166.9" cy="287.5" r="2.2" fill="#c99a6c"/><circle cx="166.5" cy="287.5" r="2.05" fill="#acacac"/><circle cx="174.1" cy="267.3" r="2.2" fill="#6f97c4"/><circle cx="174.9" cy="267.3" r="2.2" fill="#c99a6c"/><circle cx="174.5" cy="267.3" r="2.05" fill="#acacac"/><circle cx="182.1" cy="250.4" r="2.2" fill="#6f97c4"/><circle cx="182.9" cy="250.4" r="2.2" fill="#c99a6c"/><circle cx="182.5" cy="250.4" r="2.05" fill="#acacac"/><circle cx="190.1" cy="236.25" r="2.2" fill="#6f97c4"/><circle cx="190.9" cy="236.25" r="2.2" fill="#c99a6c"/><circle cx="190.5" cy="236.25" r="2.05" fill="#acacac"/><circle cx="198.1" cy="229.4" r="2.2" fill="#6f97c4"/><circle cx="198.9" cy="229.4" r="2.2" fill="#c99a6c"/><circle cx="198.5" cy="229.4" r="2.05" fill="#acacac"/><circle cx="206.1" cy="229.4" r="2.2" fill="#6f97c4"/><circle cx="206.9" cy="229.4" r="2.2" fill="#c99a6c"/><circle cx="206.5" cy="229.4" r="2.05" fill="#acacac"/><circle cx="214.1" cy="182.5" r="2.2" fill="#6f97c4"/><circle cx="214.9" cy="182.5" r="2.2" fill="#c99a6c"/><circle cx="214.5" cy="182.5" r="2.05" fill="#acacac"/><circle cx="222.1" cy="183.4" r="2.2" fill="#6f97c4"/><circle cx="222.9" cy="183.4" r="2.2" fill="#c99a6c"/><circle cx="222.5" cy="183.4" r="2.05" fill="#acacac"/><circle cx="230.1" cy="185.4" r="2.2" fill="#6f97c4"/><circle cx="230.9" cy="185.4" r="2.2" fill="#c99a6c"/><circle cx="230.5" cy="185.4" r="2.05" fill="#acacac"/><circle cx="238.1" cy="189.6" r="2.2" fill="#6f97c4"/><circle cx="238.9" cy="189.6" r="2.2" fill="#c99a6c"/><circle cx="238.5" cy="189.6" r="2.05" fill="#acacac"/><circle cx="246.1" cy="241.25" r="2.2" fill="#6f97c4"/><circle cx="246.9" cy="241.25" r="2.2" fill="#c99a6c"/><circle cx="246.5" cy="241.25" r="2.05" fill="#acacac"/><circle cx="254.1" cy="240.4" r="2.2" fill="#6f97c4"/><circle cx="254.9" cy="240.4" r="2.2" fill="#c99a6c"/><circle cx="254.5" cy="240.4" r="2.05" fill="#acacac"/><circle cx="262.1" cy="237.5" r="2.2" fill="#6f97c4"/><circle cx="262.9" cy="237.5" r="2.2" fill="#c99a6c"/><circle cx="262.5" cy="237.5" r="2.05" fill="#acacac"/><circle cx="270.1" cy="234.6" r="2.2" fill="#6f97c4"/><circle cx="270.9" cy="234.6" r="2.2" fill="#c99a6c"/><circle cx="270.5" cy="234.6" r="2.05" fill="#acacac"/><circle cx="278.1" cy="168.5" r="2.2" fill="#6f97c4"/><circle cx="278.9" cy="168.5" r="2.2" fill="#c99a6c"/><circle cx="278.5" cy="168.5" r="2.05" fill="#acacac"/><circle cx="286.1" cy="170.6" r="2.2" fill="#6f97c4"/><circle cx="286.9" cy="170.6" r="2.2" fill="#c99a6c"/><circle cx="286.5" cy="170.6" r="2.05" fill="#acacac"/><circle cx="294.1" cy="171.5" r="2.2" fill="#6f97c4"/><circle cx="294.9" cy="171.5" r="2.2" fill="#c99a6c"/><circle cx="294.5" cy="171.5" r="2.05" fill="#acacac"/><circle cx="302.1" cy="175.5" r="2.2" fill="#6f97c4"/><circle cx="302.9" cy="175.5" r="2.2" fill="#c99a6c"/><circle cx="302.5" cy="175.5" r="2.05" fill="#acacac"/><circle cx="310.1" cy="178.5" r="2.2" fill="#6f97c4"/><circle cx="310.9" cy="178.5" r="2.2" fill="#c99a6c"/><circle cx="310.5" cy="178.5" r="2.05" fill="#acacac"/><circle cx="318.1" cy="184.5" r="2.2" fill="#6f97c4"/><circle cx="318.9" cy="184.5" r="2.2" fill="#c99a6c"/><circle cx="318.5" cy="184.5" r="2.05" fill="#acacac"/><circle cx="326.1" cy="190.5" r="2.2" fill="#6f97c4"/><circle cx="326.9" cy="190.5" r="2.2" fill="#c99a6c"/><circle cx="326.5" cy="190.5" r="2.05" fill="#acacac"/><circle cx="334.1" cy="197.5" r="2.2" fill="#6f97c4"/><circle cx="334.9" cy="197.5" r="2.2" fill="#c99a6c"/><circle cx="334.5" cy="197.5" r="2.05" fill="#acacac"/><circle cx="342.1" cy="205.4" r="2.2" fill="#6f97c4"/><circle cx="342.9" cy="205.4" r="2.2" fill="#c99a6c"/><circle cx="342.5" cy="205.4" r="2.05" fill="#acacac"/><circle cx="350.1" cy="215.4" r="2.2" fill="#6f97c4"/><circle cx="350.9" cy="215.4" r="2.2" fill="#c99a6c"/><circle cx="350.5" cy="215.4" r="2.05" fill="#acacac"/><circle cx="358.1" cy="223.5" r="2.2" fill="#6f97c4"/><circle cx="358.9" cy="223.5" r="2.2" fill="#c99a6c"/><circle cx="358.5" cy="223.5" r="2.05" fill="#acacac"/><circle cx="366.1" cy="230.4" r="2.2" fill="#6f97c4"/><circle cx="366.9" cy="230.4" r="2.2" fill="#c99a6c"/><circle cx="366.5" cy="230.4" r="2.05" fill="#acacac"/><circle cx="374.1" cy="239.4" r="2.2" fill="#6f97c4"/><circle cx="374.9" cy="239.4" r="2.2" fill="#c99a6c"/><circle cx="374.5" cy="239.4" r="2.05" fill="#acacac"/><circle cx="382.1" cy="250.4" r="2.2" fill="#6f97c4"/><circle cx="382.9" cy="250.4" r="2.2" fill="#c99a6c"/><circle cx="382.5" cy="250.4" r="2.05" fill="#acacac"/><circle cx="390.1" cy="262.6" r="2.2" fill="#6f97c4"/><circle cx="390.9" cy="262.6" r="2.2" fill="#c99a6c"/><circle cx="390.5" cy="262.6" r="2.05" fill="#acacac"/><circle cx="398.1" cy="275.25" r="2.2" fill="#6f97c4"/><circle cx="398.9" cy="275.25" r="2.2" fill="#c99a6c"/><circle cx="398.5" cy="275.25" r="2.05" fill="#acacac"/><circle cx="406.1" cy="285.4" r="2.2" fill="#6f97c4"/><circle cx="406.9" cy="285.4" r="2.2" fill="#c99a6c"/><circle cx="406.5" cy="285.4" r="2.05" fill="#acacac"/><circle cx="414.1" cy="332.25" r="2.2" fill="#6f97c4"/><circle cx="414.9" cy="332.25" r="2.2" fill="#c99a6c"/><circle cx="414.5" cy="332.25" r="2.05" fill="#acacac"/><circle cx="422.1" cy="332.25" r="2.2" fill="#6f97c4"/><circle cx="422.9" cy="332.25" r="2.2" fill="#c99a6c"/><circle cx="422.5" cy="332.25" r="2.05" fill="#acacac"/><circle cx="430.1" cy="331.25" r="2.2" fill="#6f97c4"/><circle cx="430.9" cy="331.25" r="2.2" fill="#c99a6c"/><circle cx="430.5" cy="331.25" r="2.05" fill="#acacac"/></g></svg>
<!-- toolbar items -->
<svg class="abs" style="left:0;top:0" width="840" height="45" viewBox="0 0 840 45">
 <g fill="#0a2744" stroke="#3b8eea" stroke-width="1.1">
  <path d="M5 20.9 L1.7 26.2 L8.3 26.2 Z"/>
  <circle cx="14.5" cy="23.5" r="3"/>
  <path d="M5 30.6 L8.4 33.1 L7.1 36.5 L2.9 36.5 L1.6 33.1 Z"/>
  <rect x="11.5" y="30.5" width="6" height="6" rx="1"/>
 </g>
 <path d="M23.8 27.9 L31.2 27.9 L27.5 32 Z" fill="#fff"/>
 <rect x="36" y="14" width="4" height="29" fill="#141414"/>
 <g fill="#e4e4e4"><rect x="37" y="14" width="2" height="2"/><rect x="37" y="18" width="2" height="2"/><rect x="37" y="22" width="2" height="2"/><rect x="37" y="26" width="2" height="2"/><rect x="37" y="30" width="2" height="2"/><rect x="37" y="34" width="2" height="2"/><rect x="37" y="38" width="2" height="2"/><rect x="37" y="42" width="2" height="1"/></g>
 <rect x="44.5" y="15.5" width="29" height="26" fill="#3a3a3a" stroke="#d0d0d0" stroke-width="1"/>
 <!-- window controls -->
 <rect x="792" y="5" width="9" height="1" fill="#cfcfcf"/>
 <g fill="none" stroke="#cfcfcf" stroke-width="1">
  <path d="M814.5 -2 V2.5 H820.5 V-2" stroke="#a8a8a8"/>
  <rect x="810.5" y="-1.5" width="7" height="7.6" fill="#222" stroke="#b4b4b4" stroke-width="1.2"/>
  <path d="M830 -4 L840 6.5 M840 -4 L830 6.5"/>
 </g>
 <!-- search -->
 <g fill="none" stroke="#d0d0d0" stroke-width="1.3"><circle cx="710.6" cy="27.3" r="5.4"/><path d="M714.6 31.5 L718 35"/></g>
 <!-- user -->
 <g fill="none" stroke="#c4c4c4" stroke-width="1.2"><circle cx="741.5" cy="28.5" r="6"/><circle cx="741.5" cy="26.3" r="2.2"/><path d="M737 32.6 Q741.5 28.6 746 32.6"/></g>
 <circle cx="749.6" cy="24.4" r="7.3" fill="#e8431f"/>
 <text x="749.7" y="28.2" font-family="Liberation Sans, sans-serif" font-size="10.5" fill="#3a140a" text-anchor="middle">5</text>
 <!-- LVL -->
 <g fill="none" stroke="#19c37d" stroke-width="1.3" stroke-linejoin="round"><path d="M779.4 20.8 L775.8 24.6 H777.9 V28 H780.9 V24.6 H783 Z"/></g>
 <text x="773.6" y="36" font-family="Liberation Sans, sans-serif" font-size="7.8" fill="#19c37d" stroke="#19c37d" stroke-width="0.35" textLength="12.4" lengthAdjust="spacingAndGlyphs">LVL</text>
 <!-- progress -->
 <rect x="795.5" y="22.5" width="41" height="13" fill="#222" stroke="#8a8a8a"/>
 <rect x="796" y="23" width="12" height="12" fill="#178a36"/>
</svg>
<div class="tf" style="left:50.5px">M1</div>
<div class="tf" style="left:83px">M5</div>
<div class="tf" style="left:112px">M15</div>
<div class="tf" style="left:144px">M30</div>
<div class="tf" style="left:180px">H1</div>
<div class="tf" style="left:212px">H4</div>
<div class="tf" style="left:244px">D1</div>
<div class="tf" style="left:275px">W1</div>
<div class="tf" style="left:306px">MN</div>
<!-- timer -->
<div id="timer" class="abs" style="right:50px;top:47px;color:#32cd32;font-size:19.5px;line-height:24px;white-space:nowrap;transform:scaleX(1.2);transform-origin:100% 50%">00:00:29 (-4.48%)</div>
<svg width="840" height="868" viewBox="0 0 840 868" style="position:absolute;left:0;top:0" shape-rendering="crispEdges"><defs><path id="g0" d="M1 0h2v1h-2zM0 1h1v1h-1zM3 1h1v1h-1zM0 2h1v1h-1zM3 2h1v1h-1zM0 3h1v1h-1zM3 3h1v1h-1zM0 4h1v1h-1zM3 4h1v1h-1zM0 5h1v1h-1zM3 5h1v1h-1zM1 6h2v1h-2z"/><path id="g1" d="M2 0h1v1h-1zM1 1h2v1h-2zM2 2h1v1h-1zM2 3h1v1h-1zM2 4h1v1h-1zM2 5h1v1h-1zM1 6h3v1h-3z"/><path id="g2" d="M1 0h2v1h-2zM0 1h1v1h-1zM3 1h1v1h-1zM3 2h1v1h-1zM2 3h1v1h-1zM1 4h1v1h-1zM0 5h1v1h-1zM0 6h4v1h-4z"/><path id="g3" d="M0 0h3v1h-3zM3 1h1v1h-1zM3 2h1v1h-1zM1 3h2v1h-2zM3 4h1v1h-1zM3 5h1v1h-1zM0 6h3v1h-3z"/><path id="g4" d="M3 0h1v1h-1zM2 1h2v1h-2zM1 2h1v1h-1zM3 2h1v1h-1zM0 3h1v1h-1zM3 3h1v1h-1zM0 4h5v1h-5zM3 5h1v1h-1zM3 6h1v1h-1z"/><path id="g5" d="M0 0h4v1h-4zM0 1h1v1h-1zM0 2h3v1h-3zM3 3h1v1h-1zM3 4h1v1h-1zM3 5h1v1h-1zM0 6h3v1h-3z"/><path id="g6" d="M1 0h2v1h-2zM0 1h1v1h-1zM0 2h1v1h-1zM0 3h3v1h-3zM0 4h1v1h-1zM3 4h1v1h-1zM0 5h1v1h-1zM3 5h1v1h-1zM1 6h2v1h-2z"/><path id="g7" d="M0 0h4v1h-4zM3 1h1v1h-1zM2 2h1v1h-1zM2 3h1v1h-1zM1 4h1v1h-1zM1 5h1v1h-1zM0 6h1v1h-1z"/><path id="g8" d="M1 0h2v1h-2zM0 1h1v1h-1zM3 1h1v1h-1zM0 2h1v1h-1zM3 2h1v1h-1zM1 3h2v1h-2zM0 4h1v1h-1zM3 4h1v1h-1zM0 5h1v1h-1zM3 5h1v1h-1zM1 6h2v1h-2z"/><path id="g9" d="M1 0h2v1h-2zM0 1h1v1h-1zM3 1h1v1h-1zM0 2h1v1h-1zM3 2h1v1h-1zM1 3h3v1h-3zM3 4h1v1h-1zM3 5h1v1h-1zM1 6h2v1h-2z"/><path id="g10" d="M1 5h1v1h-1zM1 6h1v1h-1z"/><path id="g11" d="M1 2h1v1h-1zM1 3h1v1h-1zM1 5h1v1h-1zM1 6h1v1h-1z"/><path id="g12" d="M0 0h2v1h-2zM5 0h2v1h-2zM0 1h2v1h-2zM5 1h2v1h-2zM0 2h1v1h-1zM2 2h1v1h-1zM4 2h1v1h-1zM6 2h1v1h-1zM0 3h1v1h-1zM2 3h1v1h-1zM4 3h1v1h-1zM6 3h1v1h-1zM0 4h1v1h-1zM3 4h1v1h-1zM6 4h1v1h-1zM0 5h1v1h-1zM3 5h1v1h-1zM6 5h1v1h-1zM0 6h1v1h-1zM6 6h1v1h-1z"/><path id="g13" d="M1 2h2v1h-2zM3 3h1v1h-1zM1 4h3v1h-3zM0 5h1v1h-1zM3 5h1v1h-1zM1 6h3v1h-3z"/><path id="g14" d="M0 2h1v1h-1zM2 2h1v1h-1zM0 3h2v1h-2zM0 4h1v1h-1zM0 5h1v1h-1zM0 6h1v1h-1z"/></defs><g fill="#fff"><use href="#g4" x="797" y="43"/><use href="#g7" x="802" y="43"/><use href="#g0" x="807" y="43"/><use href="#g0" x="812" y="43"/><use href="#g10" x="817" y="43"/><use href="#g0" x="820" y="43"/><use href="#g3" x="825" y="43"/></g><g fill="#fff"><use href="#g4" x="797" y="75"/><use href="#g6" x="802" y="75"/><use href="#g8" x="807" y="75"/><use href="#g6" x="812" y="75"/><use href="#g10" x="817" y="75"/><use href="#g7" x="820" y="75"/><use href="#g0" x="825" y="75"/></g><g fill="#fff"><use href="#g4" x="797" y="107"/><use href="#g6" x="802" y="107"/><use href="#g7" x="807" y="107"/><use href="#g3" x="812" y="107"/><use href="#g10" x="817" y="107"/><use href="#g3" x="820" y="107"/><use href="#g7" x="825" y="107"/></g><g fill="#fff"><use href="#g4" x="797" y="139"/><use href="#g6" x="802" y="139"/><use href="#g6" x="807" y="139"/><use href="#g0" x="812" y="139"/><use href="#g10" x="817" y="139"/><use href="#g0" x="820" y="139"/><use href="#g4" x="825" y="139"/></g><g fill="#fff"><use href="#g4" x="797" y="171"/><use href="#g6" x="802" y="171"/><use href="#g4" x="807" y="171"/><use href="#g6" x="812" y="171"/><use href="#g10" x="817" y="171"/><use href="#g7" x="820" y="171"/><use href="#g1" x="825" y="171"/></g><g fill="#fff"><use href="#g4" x="797" y="203"/><use href="#g6" x="802" y="203"/><use href="#g3" x="807" y="203"/><use href="#g3" x="812" y="203"/><use href="#g10" x="817" y="203"/><use href="#g3" x="820" y="203"/><use href="#g8" x="825" y="203"/></g><g fill="#fff"><use href="#g4" x="797" y="235"/><use href="#g6" x="802" y="235"/><use href="#g2" x="807" y="235"/><use href="#g0" x="812" y="235"/><use href="#g10" x="817" y="235"/><use href="#g0" x="820" y="235"/><use href="#g5" x="825" y="235"/></g><g fill="#fff"><use href="#g4" x="797" y="267"/><use href="#g6" x="802" y="267"/><use href="#g0" x="807" y="267"/><use href="#g6" x="812" y="267"/><use href="#g10" x="817" y="267"/><use href="#g7" x="820" y="267"/><use href="#g2" x="825" y="267"/></g><g fill="#fff"><use href="#g4" x="797" y="299"/><use href="#g5" x="802" y="299"/><use href="#g9" x="807" y="299"/><use href="#g3" x="812" y="299"/><use href="#g10" x="817" y="299"/><use href="#g3" x="820" y="299"/><use href="#g9" x="825" y="299"/></g><g fill="#fff"><use href="#g4" x="797" y="331"/><use href="#g5" x="802" y="331"/><use href="#g8" x="807" y="331"/><use href="#g0" x="812" y="331"/><use href="#g10" x="817" y="331"/><use href="#g0" x="820" y="331"/><use href="#g6" x="825" y="331"/></g><g fill="#fff"><use href="#g4" x="797" y="363"/><use href="#g5" x="802" y="363"/><use href="#g6" x="807" y="363"/><use href="#g6" x="812" y="363"/><use href="#g10" x="817" y="363"/><use href="#g7" x="820" y="363"/><use href="#g3" x="825" y="363"/></g><g fill="#fff"><use href="#g4" x="797" y="395"/><use href="#g5" x="802" y="395"/><use href="#g5" x="807" y="395"/><use href="#g3" x="812" y="395"/><use href="#g10" x="817" y="395"/><use href="#g4" x="820" y="395"/><use href="#g0" x="825" y="395"/></g><g fill="#fff"><use href="#g4" x="797" y="427"/><use href="#g5" x="802" y="427"/><use href="#g4" x="807" y="427"/><use href="#g0" x="812" y="427"/><use href="#g10" x="817" y="427"/><use href="#g0" x="820" y="427"/><use href="#g7" x="825" y="427"/></g><g fill="#fff"><use href="#g4" x="797" y="459"/><use href="#g5" x="802" y="459"/><use href="#g2" x="807" y="459"/><use href="#g6" x="812" y="459"/><use href="#g10" x="817" y="459"/><use href="#g7" x="820" y="459"/><use href="#g4" x="825" y="459"/></g><g fill="#fff"><use href="#g4" x="797" y="491"/><use href="#g5" x="802" y="491"/><use href="#g1" x="807" y="491"/><use href="#g3" x="812" y="491"/><use href="#g10" x="817" y="491"/><use href="#g4" x="820" y="491"/><use href="#g1" x="825" y="491"/></g><g fill="#fff"><use href="#g1" x="797" y="530"/><use href="#g0" x="802" y="530"/><use href="#g0" x="807" y="530"/><use href="#g10" x="812" y="530"/><use href="#g0" x="815" y="530"/><use href="#g0" x="820" y="530"/></g><g fill="#fff"><use href="#g7" x="797" y="556"/><use href="#g0" x="802" y="556"/><use href="#g10" x="807" y="556"/><use href="#g0" x="810" y="556"/><use href="#g0" x="815" y="556"/></g><g fill="#fff"><use href="#g5" x="797" y="576"/><use href="#g0" x="802" y="576"/><use href="#g10" x="807" y="576"/><use href="#g0" x="810" y="576"/><use href="#g0" x="815" y="576"/></g><g fill="#fff"><use href="#g3" x="797" y="596"/><use href="#g0" x="802" y="596"/><use href="#g10" x="807" y="596"/><use href="#g0" x="810" y="596"/><use href="#g0" x="815" y="596"/></g><g fill="#fff"><use href="#g0" x="797" y="621"/><use href="#g10" x="802" y="621"/><use href="#g0" x="805" y="621"/><use href="#g0" x="810" y="621"/></g><g fill="#fff"><use href="#g1" x="797" y="634"/><use href="#g0" x="802" y="634"/><use href="#g0" x="807" y="634"/><use href="#g10" x="812" y="634"/><use href="#g0" x="815" y="634"/><use href="#g0" x="820" y="634"/></g><g fill="#fff"><use href="#g8" x="797" y="648"/><use href="#g0" x="802" y="648"/><use href="#g10" x="807" y="648"/><use href="#g0" x="810" y="648"/><use href="#g0" x="815" y="648"/></g><g fill="#fff"><use href="#g2" x="797" y="706"/><use href="#g0" x="802" y="706"/><use href="#g10" x="807" y="706"/><use href="#g0" x="810" y="706"/><use href="#g0" x="815" y="706"/></g><g fill="#fff"><use href="#g0" x="797" y="719"/><use href="#g10" x="802" y="719"/><use href="#g0" x="805" y="719"/><use href="#g0" x="810" y="719"/></g><g fill="#fff"><use href="#g1" x="14" y="734"/><use href="#g9" x="19" y="734"/><use href="#g12" x="27" y="734"/><use href="#g13" x="35" y="734"/><use href="#g14" x="40" y="734"/><use href="#g1" x="46" y="734"/><use href="#g5" x="51" y="734"/><use href="#g11" x="56" y="734"/><use href="#g4" x="59" y="734"/><use href="#g2" x="64" y="734"/></g><g fill="#fff"><use href="#g1" x="78" y="734"/><use href="#g9" x="83" y="734"/><use href="#g12" x="91" y="734"/><use href="#g13" x="99" y="734"/><use href="#g14" x="104" y="734"/><use href="#g1" x="110" y="734"/><use href="#g5" x="115" y="734"/><use href="#g11" x="120" y="734"/><use href="#g5" x="123" y="734"/><use href="#g0" x="128" y="734"/></g><g fill="#fff"><use href="#g1" x="142" y="734"/><use href="#g9" x="147" y="734"/><use href="#g12" x="155" y="734"/><use href="#g13" x="163" y="734"/><use href="#g14" x="168" y="734"/><use href="#g1" x="174" y="734"/><use href="#g5" x="179" y="734"/><use href="#g11" x="184" y="734"/><use href="#g5" x="187" y="734"/><use href="#g8" x="192" y="734"/></g><g fill="#fff"><use href="#g1" x="206" y="734"/><use href="#g9" x="211" y="734"/><use href="#g12" x="219" y="734"/><use href="#g13" x="227" y="734"/><use href="#g14" x="232" y="734"/><use href="#g1" x="238" y="734"/><use href="#g6" x="243" y="734"/><use href="#g11" x="248" y="734"/><use href="#g0" x="251" y="734"/><use href="#g6" x="256" y="734"/></g><g fill="#fff"><use href="#g1" x="270" y="734"/><use href="#g9" x="275" y="734"/><use href="#g12" x="283" y="734"/><use href="#g13" x="291" y="734"/><use href="#g14" x="296" y="734"/><use href="#g1" x="302" y="734"/><use href="#g6" x="307" y="734"/><use href="#g11" x="312" y="734"/><use href="#g1" x="315" y="734"/><use href="#g4" x="320" y="734"/></g><g fill="#fff"><use href="#g1" x="334" y="734"/><use href="#g9" x="339" y="734"/><use href="#g12" x="347" y="734"/><use href="#g13" x="355" y="734"/><use href="#g14" x="360" y="734"/><use href="#g1" x="366" y="734"/><use href="#g6" x="371" y="734"/><use href="#g11" x="376" y="734"/><use href="#g2" x="379" y="734"/><use href="#g2" x="384" y="734"/></g><g fill="#fff"><use href="#g1" x="398" y="734"/><use href="#g9" x="403" y="734"/><use href="#g12" x="411" y="734"/><use href="#g13" x="419" y="734"/><use href="#g14" x="424" y="734"/><use href="#g1" x="430" y="734"/><use href="#g6" x="435" y="734"/><use href="#g11" x="440" y="734"/><use href="#g3" x="443" y="734"/><use href="#g0" x="448" y="734"/></g><g fill="#fff"><use href="#g1" x="-50" y="734"/><use href="#g9" x="-45" y="734"/><use href="#g12" x="-37" y="734"/><use href="#g13" x="-29" y="734"/><use href="#g14" x="-24" y="734"/><use href="#g1" x="-18" y="734"/><use href="#g5" x="-13" y="734"/><use href="#g11" x="-8" y="734"/><use href="#g3" x="-5" y="734"/><use href="#g4" x="0" y="734"/></g><rect x="794" y="273" width="39" height="12" fill="#fff"/><rect x="794" y="273" width="39" height="1" fill="#ffe2b8"/><g fill="#000"><use href="#g4" x="797" y="276"/><use href="#g6" x="802" y="276"/><use href="#g0" x="807" y="276"/><use href="#g3" x="812" y="276"/><use href="#g10" x="817" y="276"/><use href="#g0" x="820" y="276"/><use href="#g3" x="825" y="276"/></g></svg>
<!-- price tag -->
<!-- tooltip -->
<div class="abs" style="left:763px;top:496px;width:90px;height:18px;background:rgba(50,50,50,0.68);border:1px solid rgba(125,125,125,0.6)"></div>
<div id="tip" class="abs" style="left:769px;top:499px;color:#a9a9a9;letter-spacing:-0.25px;font-size:12px;line-height:15px;white-space:nowrap">Vertical scale</div>
<!-- bottom panel -->
<div class="abs" style="left:0;top:749px;width:840px;height:1px;background:#a8a8a8"></div>
<div class="abs" style="left:0;top:750px;width:840px;height:24px;background:#2e2e2e"></div>
<div class="abs" style="left:0;top:774px;width:840px;height:1px;background:#a8a8a8"></div>
<div class="abs" style="left:0;top:775px;width:840px;height:44px;background:#1f1f1f"></div>
<div class="abs" style="left:0;top:818px;width:840px;height:1px;background:#3e3e3e"></div>
<div class="abs" style="left:0;top:819px;width:840px;height:19px;background:#2b2b2b"></div>
<div class="abs" style="left:0;top:838px;width:840px;height:21px;background:#444"></div>
<div class="abs" style="left:0;top:859px;width:840px;height:9px;background:#1f1f1f"></div>
<div class="abs" style="left:171px;top:775px;width:1px;height:63px;background:#444"></div>
<div class="abs" style="left:347px;top:775px;width:1px;height:63px;background:#444"></div>
<div class="abs" style="left:523px;top:775px;width:1px;height:63px;background:#444"></div>
<svg class="abs" style="left:0;top:749px" width="840" height="119" viewBox="0 749 840 119">
 <path d="M810.4 756.6 V762.6 L806.8 759.6 Z M827.6 756.6 V762.6 L831.2 759.6 Z" fill="#5c5c5c"/>
 <path d="M826 788.5 H833.4 L829.7 784.6 Z" fill="#f0f0f0"/>
 <g stroke="#d0d0d0" stroke-width="1.7"><path d="M831.3 805.5 L837.7 812 M837.7 805.5 L831.3 812"/><path d="M831.3 825.5 L837.7 832 M837.7 825.5 L831.3 832"/></g>
</svg>
<div class="hd" style="right:674px">S / L</div>
<div class="hd" style="right:498px">T / P</div>
<div class="hd" style="right:321px">Price</div>
<div class="hd" style="right:24px">Profit</div>
<div class="cell" style="right:320.5px;top:802px">4603.03</div>
<div class="cell" style="right:320.5px;top:822px">4603.35</div>
<div class="cell" style="right:19px;top:802px;color:#e2574c">-283.51</div>
<div class="cell" style="right:19px;top:822px;color:#2b8cee">282.95</div>
<div class="cell" style="right:18px;top:841px;color:#fff;font-weight:bold;font-size:13px;letter-spacing:-0.2px">-0.56</div>
</body></html>
